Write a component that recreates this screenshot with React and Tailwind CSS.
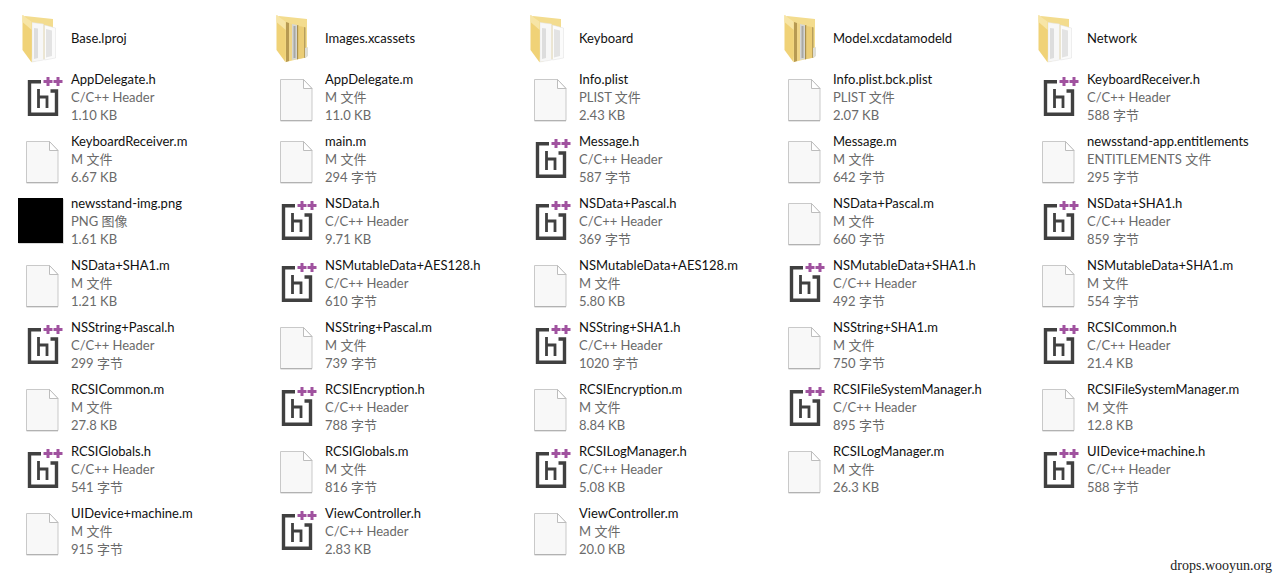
const FONT = { fontFamily: 'Lato, "Noto Sans CJK SC", sans-serif' };

function HIcon() {
  return (
    <svg width="54" height="62" viewBox="0 0 54 62" className="shrink-0">
      <path d="M24 15.800H12.500V48.200H39.500V25H33.500" fill="none" stroke="#404040" strokeWidth="3.400" />
      <path d="M21.500 23V42M21.500 31H30V42" fill="none" stroke="#404040" strokeWidth="2.800" />
      <path d="M26.500 15.500H35.500M31 11V20M36.500 15.500H45.500M41 11V20" fill="none" stroke="#a0529f" strokeWidth="3" />
    </svg>
  );
}

function FileIcon() {
  return (
    <svg width="54" height="62" viewBox="0 0 54 62" className="shrink-0">
      <path d="M9.500 13.500H32.500L41 22.500V54.500H9.500Z" fill="#f8f8f8" stroke="#c9c9c9" />
      <path d="M9.500 54.800H41" stroke="#a9a9a9" />
      <path d="M32.500 13.500V22.500H41Z" fill="#ffffff" stroke="#bdbdbd" />
    </svg>
  );
}

function PngIcon() {
  return (
    <svg width="54" height="62" viewBox="0 0 54 62" className="shrink-0">
      <rect x="1" y="8" width="45" height="45" fill="#000000" />
      <path d="M1.500 53.500H46.500V9" fill="none" stroke="#d8d8d8" />
    </svg>
  );
}

function FolderIcon({ dark }) {
  return (
    <svg width="54" height="66" viewBox="0 0 54 66" className="shrink-0">
      <path d="M8 16L36 19V57L15 62Z" fill="#f3dc8e" />
      {dark ? (
        <>
          <path d="M15 22L18 23V61L15 62Z" fill="#b79a52" />
          <path d="M18 23L21 24V60L18 61Z" fill="#efd588" />
          <path d="M21 24L26 25V59L21 60Z" fill="#d6d6d2" />
          <path d="M22.500 26H24.500V58H22.500Z" fill="#a8a8a4" />
          <path d="M26 25L27.500 25.500V59L26 59.500Z" fill="#a98f4e" />
          <path d="M27.500 26L33 27V58L27.500 59Z" fill="#ebcd76" />
          <path d="M33 27L34.500 27.500V57.500L33 58Z" fill="#b89f5c" />
          <path d="M34 48L37 47V56L34 58Z" fill="#deded6" />
        </>
      ) : (
        <>
          <path d="M15 22.500L26.500 24V60L15 62Z" fill="#f7f7f7" stroke="#e2e2e2" strokeWidth="0.500" />
          <path d="M17 28L21 28.500V58L17 59Z" fill="#dddddd" />
          <path d="M27.500 25L38.500 28V58L27.500 60Z" fill="#fbfbfb" stroke="#dedede" strokeWidth="0.500" />
          <path d="M29 29L35 30.500V56L29 57.500Z" fill="#e3e3e3" />
        </>
      )}
      <path d="M5.500 15L14.700 21.500V62.500L5.500 50Z" fill="#f0d277" />
      <path d="M5.500 15L14.700 21.500V30L5.500 22Z" fill="#f7e5a6" />
    </svg>
  );
}

const ICONS = { h: HIcon, m: FileIcon, p: PngIcon };
const HEADER = "C/C++ Header";
const M = "M 文件";

const folders = [
  ["Base.lproj", false],
  ["Images.xcassets", true],
  ["Keyboard", false],
  ["Model.xcdatamodeld", true],
  ["Network", false],
];

const rows = [
  [["h", "AppDelegate.h", HEADER, "1.10 KB"], ["m", "AppDelegate.m", M, "11.0 KB"], ["m", "Info.plist", "PLIST 文件", "2.43 KB"], ["m", "Info.plist.bck.plist", "PLIST 文件", "2.07 KB"], ["h", "KeyboardReceiver.h", HEADER, "588 字节"]],
  [["m", "KeyboardReceiver.m", M, "6.67 KB"], ["m", "main.m", M, "294 字节"], ["h", "Message.h", HEADER, "587 字节"], ["m", "Message.m", M, "642 字节"], ["m", "newsstand-app.entitlements", "ENTITLEMENTS 文件", "295 字节"]],
  [["p", "newsstand-img.png", "PNG 图像", "1.61 KB"], ["h", "NSData.h", HEADER, "9.71 KB"], ["h", "NSData+Pascal.h", HEADER, "369 字节"], ["m", "NSData+Pascal.m", M, "660 字节"], ["h", "NSData+SHA1.h", HEADER, "859 字节"]],
  [["m", "NSData+SHA1.m", M, "1.21 KB"], ["h", "NSMutableData+AES128.h", HEADER, "610 字节"], ["m", "NSMutableData+AES128.m", M, "5.80 KB"], ["h", "NSMutableData+SHA1.h", HEADER, "492 字节"], ["m", "NSMutableData+SHA1.m", M, "554 字节"]],
  [["h", "NSString+Pascal.h", HEADER, "299 字节"], ["m", "NSString+Pascal.m", M, "739 字节"], ["h", "NSString+SHA1.h", HEADER, "1020 字节"], ["m", "NSString+SHA1.m", M, "750 字节"], ["h", "RCSICommon.h", HEADER, "21.4 KB"]],
  [["m", "RCSICommon.m", M, "27.8 KB"], ["h", "RCSIEncryption.h", HEADER, "788 字节"], ["m", "RCSIEncryption.m", M, "8.84 KB"], ["h", "RCSIFileSystemManager.h", HEADER, "895 字节"], ["m", "RCSIFileSystemManager.m", M, "12.8 KB"]],
  [["h", "RCSIGlobals.h", HEADER, "541 字节"], ["m", "RCSIGlobals.m", M, "816 字节"], ["h", "RCSILogManager.h", HEADER, "5.08 KB"], ["m", "RCSILogManager.m", M, "26.3 KB"], ["h", "UIDevice+machine.h", HEADER, "588 字节"]],
  [["m", "UIDevice+machine.m", M, "915 字节"], ["h", "ViewController.h", HEADER, "2.83 KB"], ["m", "ViewController.m", M, "20.0 KB"]],
];

function Item({ item }) {
  const [kind, name, type, size] = item;
  const Icon = ICONS[kind];
  return (
    <div className="flex h-[62px] w-[254px] shrink-0">
      <Icon />
      <div className="flex flex-col pt-[4px] text-[13px] leading-[18px] whitespace-nowrap">
        <span className="text-[#111111]">{name}</span>
        <span className="text-[#6a6a6a]">{type}</span>
        <span className="text-[#6a6a6a]">{size}</span>
      </div>
    </div>
  );
}

export default function App() {
  return (
    <div className="relative h-[578px] w-[1276px] overflow-hidden bg-white pl-[17px]" style={FONT}>
      <div className="flex h-[66px]">
        {folders.map(([name, dark]) => (
          <div key={name} className="flex h-[66px] w-[254px] shrink-0">
            <FolderIcon dark={dark} />
            <span className="pt-[29px] text-[13px] leading-[18px] text-[#111111]">{name}</span>
          </div>
        ))}
      </div>
      {rows.map((row, i) => (
        <div key={i} className="flex">
          {row.map((item) => (
            <Item key={item[1]} item={item} />
          ))}
        </div>
      ))}
      <span className="absolute right-[4px] bottom-[4px] text-[14px] leading-[16px] text-[#222222]" style={{ fontFamily: '"Liberation Serif", serif' }}>
        drops.wooyun.org
      </span>
    </div>
  );
}
